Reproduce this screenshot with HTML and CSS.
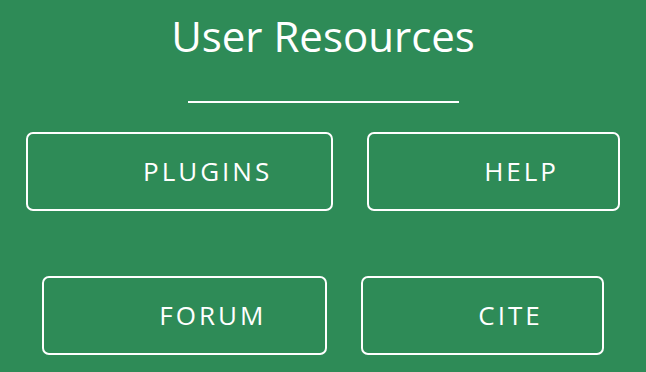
FILE: index.html
```html
<!DOCTYPE html>
<html lang="en">
  <head>
    <meta charset="UTF-8" />
    <meta name="viewport" content="width=device-width, initial-scale=1.0" />
    <title>User Resources</title>
    <link rel="stylesheet" href="styles.css">
  </head>
  <body>
    <div class="resources">
      <!-- 标题 -->
      <h1 class="title">User Resources</h1>
      <div class="rule"></div>
      <!-- 按钮 -->
      <div class="row">
        <a class="btn" href="#">PLUGINS</a>
        <a class="btn" href="#">HELP</a>
      </div>
      <div class="row">
        <a class="btn" href="#">FORUM</a>
        <a class="btn" href="#">CITE</a>
      </div>
    </div>
  </body>
</html>
```

FILE: styles.css
```css
/* 样式初始化 */
* {
  margin: 0;
  padding: 0;
  box-sizing: border-box;
}
body {
  background: #2e8b57;
  color: #fff;
  font-family: "Open Sans", "Noto Sans", sans-serif;
  overflow: hidden;
}
.resources {
  display: flex;
  flex-direction: column;
  align-items: center;
  padding-top: 6px;
}
/* 标题 */
.title {
  font-size: 42px;
  font-weight: 400;
  line-height: 60px;
}
/* 标题下的横线 */
.rule {
  width: 271px;
  height: 2px;
  background: #fff;
  margin: 35px 0 29px;
}
/* 按钮行 */
.row {
  display: flex;
  justify-content: center;
  gap: 34px;
}
.row + .row {
  margin-top: 65px;
}
.btn {
  display: block;
  height: 79px;
  line-height: 75px;
  padding: 0 59px 0 115px;
  border: 2px solid #fff;
  border-radius: 7px;
  color: #fff;
  text-decoration: none;
  font-size: 26px;
  letter-spacing: 3px;
}
```
